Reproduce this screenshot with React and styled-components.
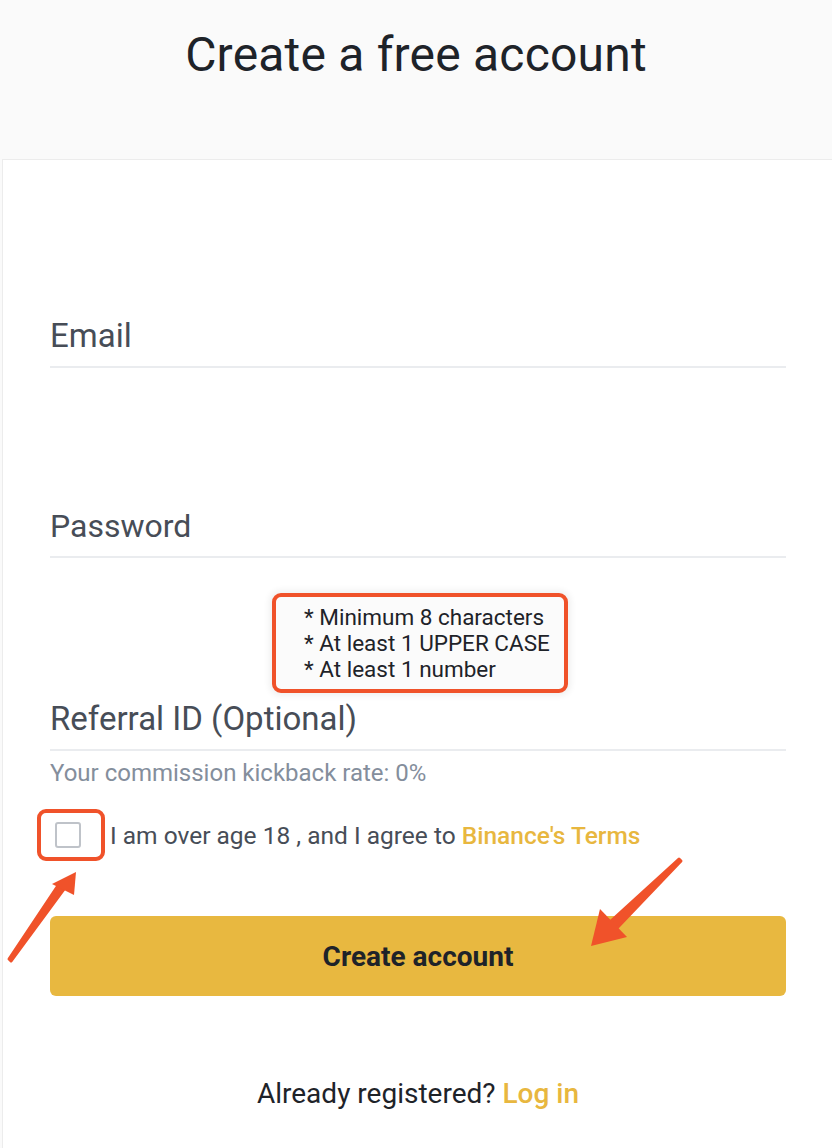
import React from "react";
import styled, { createGlobalStyle } from "styled-components";

const Global = createGlobalStyle`
  html, body { margin: 0; padding: 0; background: #fafafa; }
  body { font-family: Roboto, "Noto Sans", "Liberation Sans", sans-serif; color: #1e2329; }
  * { box-sizing: border-box; }
`;

const Page = styled.div`
  position: relative;
  width: 832px;
  height: 1148px;
  overflow: hidden;
  display: flex;
  flex-direction: column;
`;

const Header = styled.header`
  height: 159px;
  display: flex;
  justify-content: center;
  padding-top: 25px;
  background: #fafafa;
`;

const Title = styled.h1`
  margin: 0;
  font-size: 48px;
  font-weight: 400;
  line-height: 60px;
  color: #1e2329;
  letter-spacing: 0.2px;
`;

const Card = styled.main`
  flex: 1;
  margin-left: 2px;
  background: #fff;
  border-left: 1px solid #ececec;
  border-top: 1px solid #ececec;
  padding: 156px 46px 0 47px;
  display: flex;
  flex-direction: column;
`;

const Field = styled.div`
  border-bottom: 2px solid #eaecef;
  padding-bottom: 10px;
  margin-top: ${(p) => p.$mt || 0}px;
`;

const Label = styled.div`
  font-size: ${(p) => p.$size || 33}px;
  line-height: 40px;
  color: #474d57;
`;

const Tooltip = styled.div`
  align-self: center;
  margin: 35px 0 0 4px;
  width: 296px;
  padding: 7px 0 7px 28px;
  border: 4px solid #f0522a;
  border-radius: 9px;
  background: #fbfbfb;
  box-shadow: 0 0 6px 3px rgba(0, 0, 0, 0.06);
  font-size: 22.5px;
  line-height: 26px;
  color: #1e2329;
`;

const Hint = styled.div`
  margin-top: 8px;
  font-size: 24px;
  line-height: 28px;
  color: #848e9c;
`;

const AgreeRow = styled.div`
  display: flex;
  align-items: center;
  margin: 22px 0 0 -13px;
`;

const Highlight = styled.div`
  width: 68px;
  height: 52px;
  border: 4px solid #f0522a;
  border-radius: 9px;
  display: flex;
  align-items: center;
  justify-content: center;
  padding-right: 6px;
  margin-right: 5px;
`;

const Checkbox = styled.span`
  width: 26px;
  height: 26px;
  border: 2px solid #bfc3c9;
  border-radius: 3px;
  background: #fff;
`;

const AgreeText = styled.span`
  font-size: 24.5px;
  color: #474d57;
`;

const Link = styled.a`
  color: #e8b73f;
  font-weight: 500;
  text-decoration: none;
`;

const Button = styled.button`
  margin-top: 55px;
  height: 80px;
  border: none;
  border-radius: 6px;
  background: #e8b840;
  font-family: inherit;
  font-size: 28px;
  font-weight: 700;
  color: #1e2329;
`;

const Footer = styled.div`
  margin-top: 81px;
  text-align: center;
  font-size: 28px;
  color: #1e2329;
`;

const Overlay = styled.svg`
  position: absolute;
  left: 0;
  top: 0;
  pointer-events: none;
`;

export default function App() {
  return (
    <Page>
      <Global />
      <Header>
        <Title>Create a free account</Title>
      </Header>
      <Card>
        <Field>
          <Label>Email</Label>
        </Field>
        <Field $mt={138}>
          <Label $size={32}>Password</Label>
        </Field>
        <Tooltip>
          <div>* Minimum 8 characters</div>
          <div>* At least 1 UPPER CASE</div>
          <div>* At least 1 number</div>
        </Tooltip>
        <Field $mt={6}>
          <Label>Referral ID (Optional)</Label>
        </Field>
        <Hint>Your commission kickback rate: 0%</Hint>
        <AgreeRow>
          <Highlight>
            <Checkbox />
          </Highlight>
          <AgreeText>
            I am over age 18 , and I agree to <Link>Binance's Terms</Link>
          </AgreeText>
        </AgreeRow>
        <Button>Create account</Button>
        <Footer>
          Already registered? <Link>Log in</Link>
        </Footer>
      </Card>
      <Overlay width="832" height="1148" viewBox="0 0 832 1148">
        <path d="M9 959 L59 884 L64 889 L11 961 Z" fill="#f0522a" stroke="#f0522a" strokeWidth="3" strokeLinejoin="round" />
        <path d="M76 872 L52 884 L74 895 Z" fill="#f0522a" />
        <path d="M679 859 L611 921 L617 928 L681 861 Z" fill="#f0522a" stroke="#f0522a" strokeWidth="3" strokeLinejoin="round" />
        <path d="M591 946 L600 909 L627 937 Z" fill="#f0522a" />
      </Overlay>
    </Page>
  );
}
